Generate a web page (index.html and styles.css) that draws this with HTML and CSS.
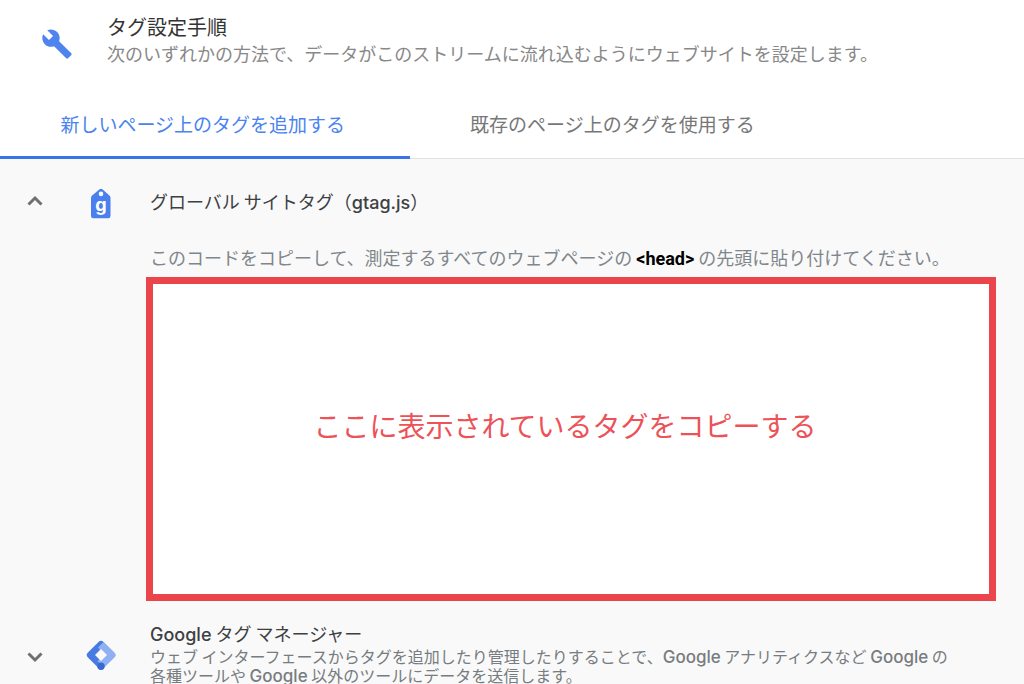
FILE: index.html
```html
<!DOCTYPE html>
<html lang="ja">
<head>
<meta charset="utf-8">
<title>タグ設定手順</title>
<link rel="stylesheet" href="styles.css">
</head>
<body>
<header class="header">
  <svg class="wrench" viewBox="0 0 24 24" aria-hidden="true"><path d="M22.7 19l-9.1-9.1c.9-2.3.4-5-1.500-6.900-2-2-5-2.400-7.400-1.300L9 6 6 9 1.600 4.700C.4 7.100.9 10.100 2.900 12.100c1.900 1.900 4.600 2.400 6.900 1.500l9.100 9.100c.4.4 1 .4 1.400 0l2.300-2.300c.5-.4.500-1.100.1-1.400z"/></svg>
  <div>
    <h1 class="title">タグ設定手順</h1>
    <p class="subtitle">次のいずれかの方法で、データがこのストリームに流れ込むようにウェブサイトを設定します。</p>
  </div>
</header>
<nav class="tabs" role="tablist">
  <button class="tab tab-active" role="tab" aria-selected="true">新しいページ上のタグを追加する</button>
  <button class="tab" role="tab" aria-selected="false">既存のページ上のタグを使用する</button>
</nav>
<main class="content">
  <section class="row">
    <button class="toggle" aria-label="折りたたむ" aria-expanded="true"><svg class="chevron" viewBox="0 0 16 16"><path d="M1.500 11.500 8 5l6.500 6.500"/></svg></button>
    <svg class="product" viewBox="0 0 32 32" aria-hidden="true">
      <path class="blue" fill-rule="evenodd" d="M14.600 2.300q1.400-1.200 2.800 0l7 6.200q1.100 1 1.100 2.400V29q0 2.200-2.200 2.200H8.200Q6 31.200 6 29V10.900Q6 9.500 7.100 8.500zM16 4.600a2.300 2.300 0 1 0 0 4.600 2.300 2.300 0 0 0 0-4.600z"/>
      <text class="tag-letter" x="16" y="24" text-anchor="middle">g</text>
    </svg>
    <div class="body">
      <h2 class="name">グローバル サイトタグ（<span class="latin">gtag.js</span>）</h2>
      <p class="hint">このコードをコピーして、測定するすべてのウェブページの <strong class="code">&lt;head&gt;</strong> の先頭に貼り付けてください。</p>
      <div class="snippet">ここに表示されているタグをコピーする</div>
    </div>
  </section>
  <section class="row row-manager">
    <button class="toggle toggle-low" aria-label="展開する" aria-expanded="false"><svg class="chevron" viewBox="0 0 16 16"><path d="M1.500 4.500 8 11l6.500-6.500"/></svg></button>
    <svg class="product manager-icon" viewBox="0 0 32 32" aria-hidden="true">
      <rect class="mid" x="5" y="5" width="22" height="22" rx="3.500" transform="rotate(45 16 16)"/>
      <path class="pale" d="M18.500 3 29.500 13.700q2.300 2.300 0 4.600L18.500 29 12.500 22 19.500 16 13 8.500z"/>
      <path class="hole" d="M16 10 22 16 16 22 10 16z"/>
      <circle class="deep" cx="16" cy="27.300" r="3.700"/>
    </svg>
    <div class="body">
      <h2 class="name"><span class="latin">Google</span> タグ マネージャー</h2>
      <p class="description">ウェブ インターフェースからタグを追加したり管理したりすることで、<span class="latin latin-large">Google</span> アナリティクスなど <span class="latin latin-large">Google</span> の各種ツールや <span class="latin latin-large">Google</span> 以外のツールにデータを送信します。</p>
    </div>
  </section>
</main>
</body>
</html>
```
FILE: styles.css
```css
* { box-sizing: border-box; }
body {
  margin: 0;
  background: #f9f9f9;
  color: #3c4043;
  font-family: "Noto Sans CJK JP", sans-serif;
}
h1, h2, p { margin: 0; font-weight: 400; }
button { font: inherit; border: 0; background: none; padding: 0; cursor: pointer; }
.header {
  display: flex;
  align-items: flex-start;
  gap: 34px;
  padding: 14px 24px 24px 41px;
  background: #fff;
}
.wrench { width: 32px; height: 32px; margin-top: 14px; flex: none; fill: #4f83ee; }
.title { font-size: 20px; line-height: 26px; color: #333; }
.subtitle { font-size: 18px; line-height: 26px; color: #888; }
.tabs { display: flex; background: #fff; border-bottom: 1px solid #e0e0e0; }
.tab {
  width: 40%;
  height: 69px;
  padding-right: 4px;
  font-size: 19px;
  color: #777;
  border-bottom: 3px solid transparent;
  margin-bottom: -1px;
}
.tab-active { color: #4a83f0; border-bottom-color: #3b73e8; }
.content { padding: 28px 28px 0 27px; }
.row { display: flex; align-items: flex-start; }
.toggle { width: 16px; height: 28px; flex: none; }
.chevron { display: block; width: 16px; height: 16px; margin: auto; fill: none; stroke: #707070; stroke-width: 3; }
.product { width: 32px; height: 32px; margin: 0 29px 0 42px; flex: none; }
.blue { fill: #4a80ee; }
.tag-letter { fill: #fff; font: 700 18px Inter, sans-serif; }
.pale { fill: #8fb1f3; }
.mid { fill: #477be3; }
.deep { fill: #3769cf; }
.hole { fill: #f9f9f9; }
.body { flex: 1; min-width: 0; }
.name { padding-left: 4px; font-size: 18px; line-height: 28px; }
.latin { font-family: Inter, sans-serif; font-weight: 500; line-height: 1; }
.latin-large { font-size: 17px; }
.hint { margin-top: 30px; padding-left: 4px; font-size: 18px; line-height: 24px; color: #80868b; }
.code { font-family: Roboto, sans-serif; color: #000; }
.snippet {
  display: flex;
  align-items: center;
  justify-content: center;
  min-height: 324px;
  margin-top: 6px;
  padding: 0 12px 28px 0;
  border: 7px solid #ec444b;
  background: #fff;
  font-size: 28px;
  color: #ec5257;
}
.row-manager { margin-top: 18px; }
.toggle-low { margin-top: 24px; }
.manager-icon { margin-top: 20px; }
.description { padding: 0 48px 0 4px; font-size: 16px; line-height: 18px; color: #777c80; }
```
